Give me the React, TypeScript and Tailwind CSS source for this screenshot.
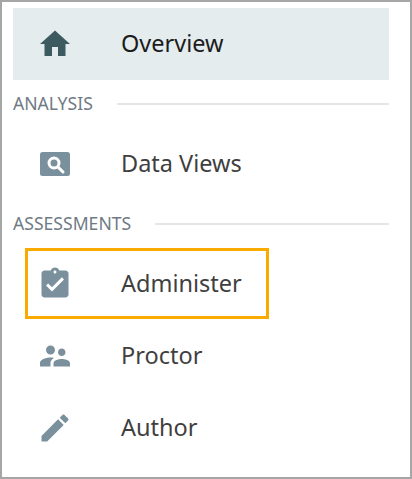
const font = "font-['Noto_Sans',sans-serif]";

function HomeIcon() {
  return (
    <svg viewBox="0 0 24 24" className="w-9 h-9 fill-[#3c5a60]">
      <path d="M10 20v-6h4v6h5v-8h3L12 3 2 12h3v8z" />
    </svg>
  );
}

function SearchIcon() {
  return (
    <svg viewBox="0 0 36 36" className="w-9 h-9">
      <rect x="3" y="6" width="30" height="24" rx="2.5" fill="#7a909c" />
      <circle cx="17" cy="17" r="5" fill="none" stroke="#fff" strokeWidth="3" />
      <path d="M21 21l5 5" stroke="#fff" strokeWidth="3" strokeLinecap="round" />
    </svg>
  );
}

function ClipboardIcon() {
  return (
    <svg viewBox="0 0 24 24" className="w-9 h-9 fill-[#7a909c]">
      <path d="M19 3h-4.18C14.4 1.84 13.3 1 12 1c-1.3 0-2.4.84-2.82 2H5c-1.1 0-2 .9-2 2v14c0 1.1.9 2 2 2h14c1.1 0 2-.9 2-2V5c0-1.1-.9-2-2-2zm-7 0c.55 0 1 .45 1 1s-.45 1-1 1-1-.45-1-1 .45-1 1-1zm-2 14l-4-4 1.41-1.41L10 14.17l6.59-6.59L18 9l-8 8z" />
    </svg>
  );
}

function PeopleIcon() {
  return (
    <svg viewBox="0 0 24 24" className="w-9 h-9 fill-[#7a909c]">
      <path d="M16.5 12c1.38 0 2.49-1.12 2.49-2.5S17.88 7 16.5 7C15.12 7 14 8.12 14 9.5s1.12 2.5 2.5 2.5zM9 11c1.66 0 2.99-1.34 2.99-3S10.66 5 9 5C7.34 5 6 6.34 6 8s1.34 3 3 3zm7.5 3c-1.83 0-5.5.92-5.5 2.75V19h11v-2.25c0-1.83-3.67-2.75-5.5-2.75zM9 13c-2.33 0-7 1.17-7 3.5V19h7v-2.25c0-.85.33-2.34 2.37-3.47C10.5 13.1 9.66 13 9 13z" />
    </svg>
  );
}

function PencilIcon() {
  return (
    <svg viewBox="0 0 24 24" className="w-9 h-9 fill-[#7a909c]">
      <path d="M3 17.25V21h3.75L17.81 9.94l-3.75-3.75L3 17.25zM20.71 7.04c.39-.39.39-1.02 0-1.41l-2.34-2.34c-.39-.39-1.02-.39-1.41 0l-1.83 1.83 3.75 3.75 1.83-1.83z" />
    </svg>
  );
}

function NavRow({ icon, label, active }: { icon: React.ReactNode; label: string; active?: boolean }) {
  return (
    <div className={`h-[72px] flex items-center pl-6 ${active ? "bg-[#e4ecee] text-[#1c1c1c]" : "text-[#3f3f3f]"}`}>
      <span className="w-9 h-9 shrink-0">{icon}</span>
      <span className="ml-[48px] text-[23.5px] leading-none">{label}</span>
    </div>
  );
}

function SectionLabel({ label }: { label: string }) {
  return (
    <div className="h-12 flex items-center gap-6">
      <span className="text-[17.6px] leading-none text-[#707a84]">{label}</span>
      <div className="flex-1 h-0.5 bg-[#e6e6e6]" />
    </div>
  );
}

export default function App() {
  return (
    <div className={`${font} w-[412px] h-[479px] bg-white border-2 border-[#a6a6a6] pt-1.5 pl-[11px] pr-[21px]`}>
      <NavRow icon={<HomeIcon />} label="Overview" active />
      <SectionLabel label="ANALYSIS" />
      <NavRow icon={<SearchIcon />} label="Data Views" />
      <SectionLabel label="ASSESSMENTS" />
      <div className="relative">
        <NavRow icon={<ClipboardIcon />} label="Administer" />
        <div className="absolute left-3 top-0 w-[244px] h-[71px] border-[3px] border-[#f9ab00]" />
      </div>
      <NavRow icon={<PeopleIcon />} label="Proctor" />
      <NavRow icon={<PencilIcon />} label="Author" />
    </div>
  );
}
